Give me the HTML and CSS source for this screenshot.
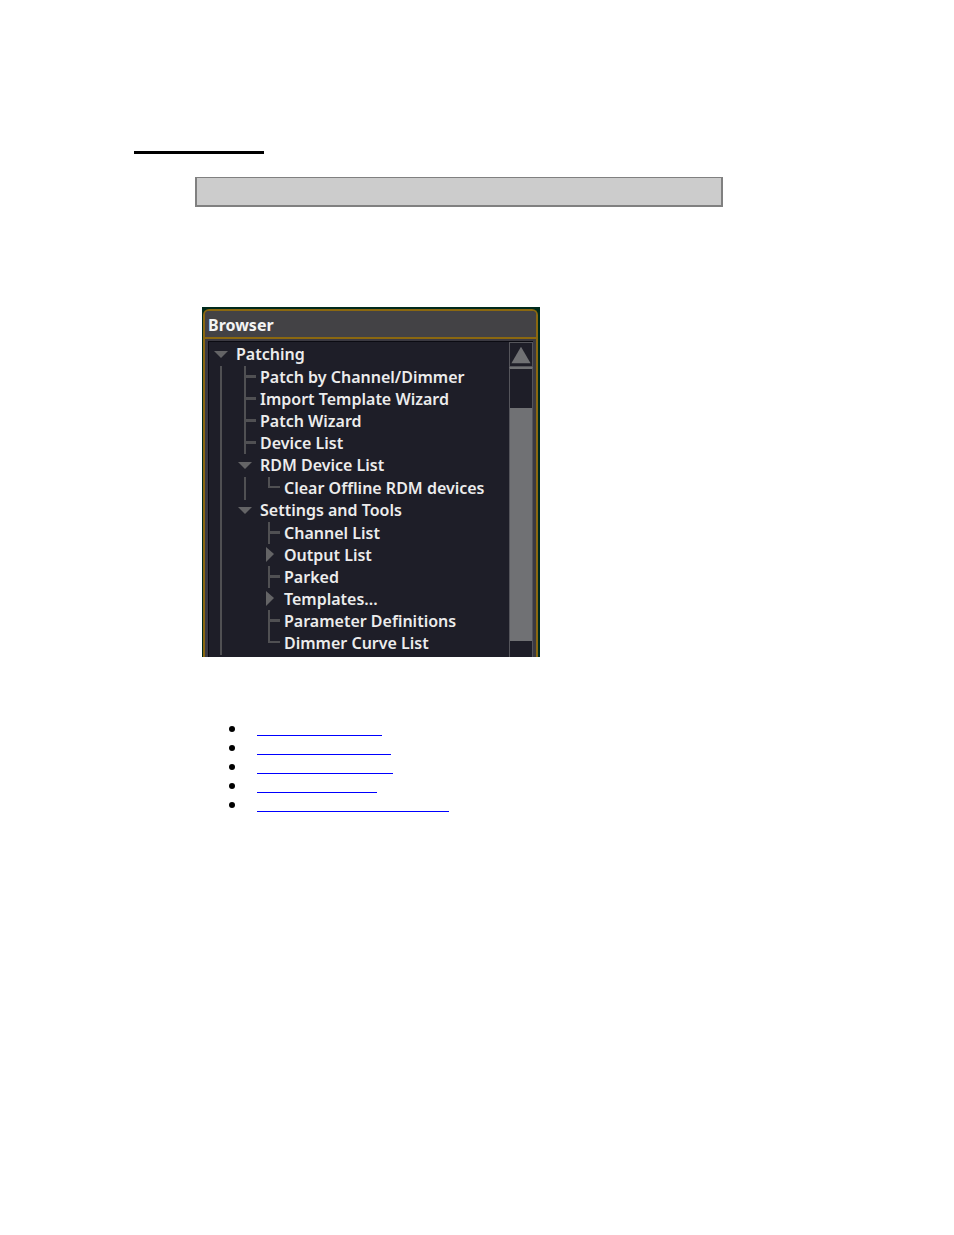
FILE: index.html
```
<!DOCTYPE html>
<html lang="en">
<head>
    <meta charset="UTF-8">
    <meta name="viewport" content="width=device-width, initial-scale=1.0">
    <title>Browser</title>
    <link rel="stylesheet" href="styles.css">
</head>
<body>
    <!-- tree markers, one 24x22 cell each; the line runs 1px over so stacked cells join -->
    <svg class="symbols" aria-hidden="true">
        <symbol id="line" viewBox="0 0 24 22" overflow="visible"><path d="M11 0h2v23h-2z"/></symbol>
        <symbol id="tee" viewBox="0 0 24 22"><path d="M11 0h2v9h10v3H13v10h-2z"/></symbol>
        <symbol id="elbow" viewBox="0 0 24 22"><path d="M11 0h2v9h10v2H11z"/></symbol>
        <symbol id="open" viewBox="0 0 24 22"><path d="M5 8h14l-7 7z"/></symbol>
        <symbol id="closed" viewBox="0 0 24 22"><path d="M9 3l8 7-8 8z"/></symbol>
    </svg>

    <main>
        <div class="title-line"></div>
        <div class="note"></div>

        <section class="browser">
            <div class="frame">
                <h2>Browser</h2>
                <div class="content">
                    <ul class="tree">
                        <li>
                            <div class="row"><svg class="arrow"><use href="#open"/></svg><span>Patching</span></div>
                            <ul>
                                <li><div class="row"><svg><use href="#line"/></svg><svg><use href="#tee"/></svg><span>Patch by Channel/Dimmer</span></div></li>
                                <li><div class="row"><svg><use href="#line"/></svg><svg><use href="#tee"/></svg><span>Import Template Wizard</span></div></li>
                                <li><div class="row"><svg><use href="#line"/></svg><svg><use href="#tee"/></svg><span>Patch Wizard</span></div></li>
                                <li><div class="row"><svg><use href="#line"/></svg><svg><use href="#tee"/></svg><span>Device List</span></div></li>
                                <li>
                                    <div class="row"><svg><use href="#line"/></svg><svg class="arrow"><use href="#open"/></svg><span>RDM Device List</span></div>
                                    <ul>
                                        <li><div class="row"><svg><use href="#line"/></svg><svg><use href="#line"/></svg><svg><use href="#elbow"/></svg><span>Clear Offline RDM devices</span></div></li>
                                    </ul>
                                </li>
                                <li>
                                    <div class="row"><svg><use href="#line"/></svg><svg class="arrow"><use href="#open"/></svg><span>Settings and Tools</span></div>
                                    <ul>
                                        <li><div class="row"><svg><use href="#line"/></svg><svg></svg><svg><use href="#tee"/></svg><span>Channel List</span></div></li>
                                        <li><div class="row"><svg><use href="#line"/></svg><svg></svg><svg class="arrow"><use href="#closed"/></svg><span>Output List</span></div></li>
                                        <li><div class="row"><svg><use href="#line"/></svg><svg></svg><svg><use href="#tee"/></svg><span>Parked</span></div></li>
                                        <li><div class="row"><svg><use href="#line"/></svg><svg></svg><svg class="arrow"><use href="#closed"/></svg><span>Templates...</span></div></li>
                                        <li><div class="row"><svg><use href="#line"/></svg><svg></svg><svg><use href="#tee"/></svg><span>Parameter Definitions</span></div></li>
                                        <li><div class="row"><svg><use href="#line"/></svg><svg></svg><svg><use href="#elbow"/></svg><span>Dimmer Curve List</span></div></li>
                                    </ul>
                                </li>
                            </ul>
                        </li>
                    </ul>
                    <div class="scrollbar">
                        <button type="button" aria-label="Scroll up">
                            <svg viewBox="0 0 22 24"><path d="M11 4l10 17H1z"/></svg>
                        </button>
                        <div class="track"><div class="thumb"></div></div>
                    </div>
                </div>
            </div>
        </section>

        <ul class="links">
            <li><a href="#channel-list" class="w-channel" aria-label="Channel List"></a></li>
            <li><a href="#output-list" class="w-output" aria-label="Output List"></a></li>
            <li><a href="#parked" class="w-parked" aria-label="Parked"></a></li>
            <li><a href="#templates" class="w-templates" aria-label="Templates"></a></li>
            <li><a href="#definitions" class="w-definitions" aria-label="Parameter Definitions"></a></li>
        </ul>
    </main>
</body>
</html>
```
FILE: styles.css
```
body {
    margin: 0;
    background: #fff;
    font-family: "Noto Sans", "Open Sans", sans-serif;
}
main {
    padding: 151px 231px 40px 134px;
}
ul {
    list-style: none;
    margin: 0;
    padding: 0;
}
.symbols {
    display: none;
}
.title-line {
    width: 130px;
    height: 3px;
    background: #000;
}
.note {
    box-sizing: border-box;
    height: 30px;
    margin: 23px 0 0 61px;
    background: #ccc;
    border: 2px solid #808080;
    border-top-width: 1px;
}

/* browser panel */
.browser {
    box-sizing: border-box;
    width: 338px;
    margin: 100px 0 0 68px;
    padding: 2px 2px 0 1px;
    background: #002a1c;
}
.frame {
    border: 2px solid #8b6810;
    border-bottom: none;
    border-radius: 6px 6px 0 0;
    background: #3b3a42;
    overflow: hidden;
}
h2 {
    margin: 0;
    padding: 2px 0 0 3px;
    height: 24px;
    background: #434245;
    border-bottom: 2px solid #8b6810;
    color: #f4f4f4;
    font-size: 16px;
    line-height: 24px;
    font-weight: 700;
}
.content {
    display: flex;
    margin: 2px 3px 0;
    border-top: 1px solid #0b0b12;
    border-left: 1px solid #0b0b12;
    background: #1e1e28;
}
.tree {
    flex: 1;
    padding: 1px 0 3px;
}
.tree ul {
    padding-top: 1px;
}
.row {
    display: flex;
    height: 22px;
    color: #ececec;
    font-size: 16px;
    line-height: 22px;
    font-weight: 600;
    white-space: nowrap;
}
.row svg {
    flex: none;
    width: 24px;
    height: 22px;
    fill: #505053;
    overflow: visible;
}
.row .arrow {
    fill: #646466;
}
.row span {
    padding-left: 3px;
}
.scrollbar {
    display: flex;
    flex-direction: column;
    width: 24px;
}
.scrollbar button {
    box-sizing: border-box;
    height: 25px;
    padding: 0;
    border: 1px solid #55555b;
    background: #1e1e28;
}
.scrollbar button svg {
    display: block;
    width: 22px;
    height: 23px;
    fill: #707174;
}
.track {
    flex: 1;
    padding: 39px 0 16px;
    display: flex;
    border: 1px solid #55555b;
    border-top: 2px solid #707174;
    border-bottom: none;
}
.thumb {
    flex: 1;
    background: #707174;
}

/* related links */
.links {
    margin: 60px 0 0 95px;
}
.links li {
    display: flex;
    align-items: flex-end;
    height: 19px;
}
.links li::before {
    content: "";
    width: 6px;
    height: 6px;
    margin: 0 22px 4px 0;
    border-radius: 50%;
    background: #000;
}
.links a {
    height: 18px;
    border-bottom: 1px solid #00f;
}
.w-channel {
    width: 125px;
}
.w-output {
    width: 134px;
}
.w-parked {
    width: 136px;
}
.w-templates {
    width: 120px;
}
.w-definitions {
    width: 192px;
}
```
